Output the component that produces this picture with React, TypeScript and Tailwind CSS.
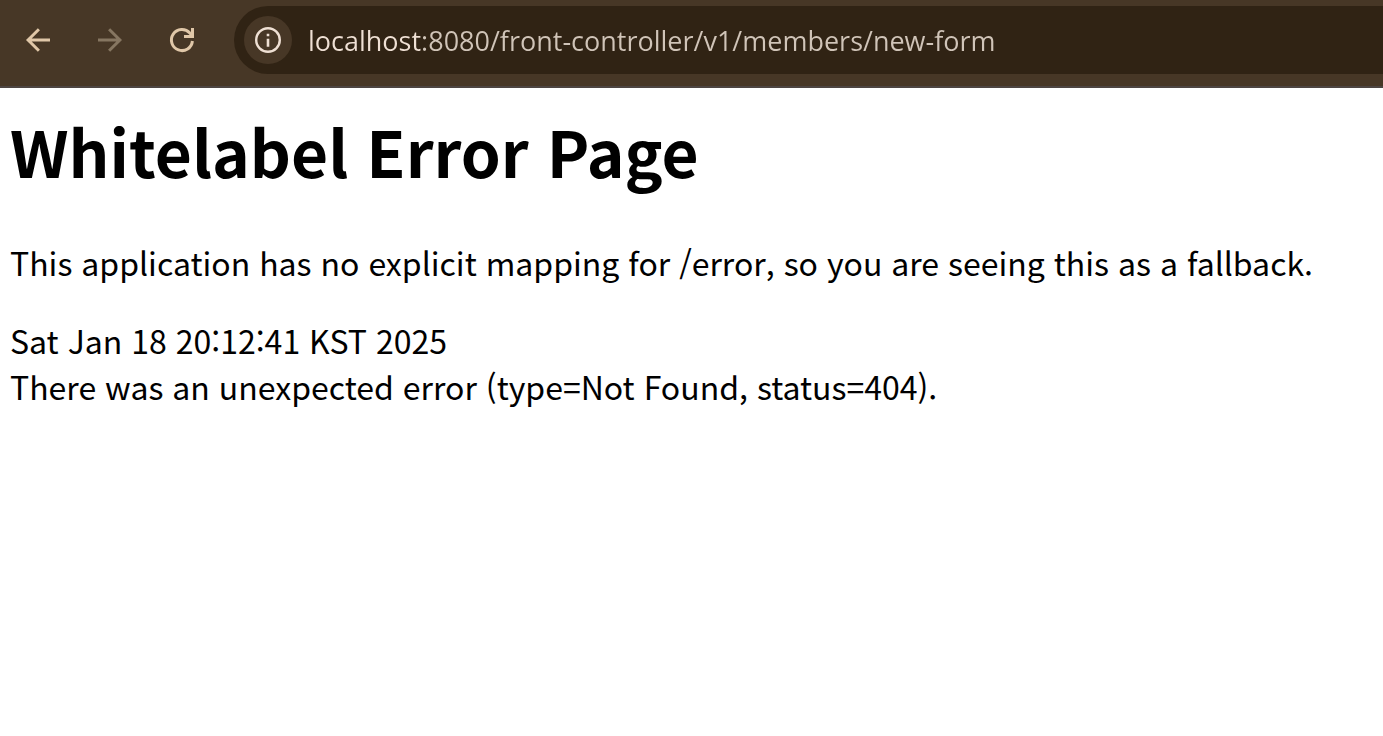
import { useState } from "react";

function BackIcon() {
  return (
    <svg viewBox="0 0 36 36" className="size-9" fill="none" stroke="currentColor" strokeWidth="3" aria-hidden="true">
      <path d="M30 18H8.5M18.900 7.200 8.100 18l10.800 10.800" />
    </svg>
  );
}

function ForwardIcon() {
  return (
    <svg viewBox="0 0 36 36" className="size-9" fill="none" stroke="currentColor" strokeWidth="3" aria-hidden="true">
      <path d="M6 18h21.500M17.100 7.200 27.900 18 17.100 28.800" />
    </svg>
  );
}

function ReloadIcon() {
  return (
    <svg viewBox="0 0 36 36" className="size-9" fill="none" stroke="currentColor" strokeWidth="3" aria-hidden="true">
      <path d="M28.400 19a10.500 10.500 0 1 1-2.600-7.900l3.200 3.400" />
      <path d="M28.500 6v8.500H20" />
    </svg>
  );
}

function InfoIcon() {
  return (
    <svg viewBox="0 0 26 26" className="size-[26px]" fill="none" aria-hidden="true">
      <circle cx="13" cy="13" r="11.800" stroke="currentColor" strokeWidth="2.400" />
      <path d="M11.700 11.700h2.600v8h-2.600zM11.700 6.800h2.600v2.500h-2.600z" fill="currentColor" />
    </svg>
  );
}

function Toolbar() {
  const [address, setAddress] = useState("localhost:8080/front-controller/v1/members/new-form");

  return (
    <header className="flex h-[88px] items-start border-b-2 border-[#4d4542] bg-[#473726] pt-1.5 pl-5 text-[#e0c7a8]">
      <nav aria-label="Navigation" className="flex h-17 shrink-0 items-center gap-9">
        <button type="button" aria-label="Back">
          <BackIcon />
        </button>
        <button type="button" aria-label="Forward" disabled className="text-[#867661]">
          <ForwardIcon />
        </button>
        <button type="button" aria-label="Reload">
          <ReloadIcon />
        </button>
      </nav>
      <div className="ml-[34px] flex h-17 min-w-0 flex-1 items-center rounded-l-full bg-[#302314] pl-2.5">
        <button
          type="button"
          aria-label="View site information"
          className="flex size-12 shrink-0 items-center justify-center rounded-full bg-[#473726] text-[#efe0d4]"
        >
          <InfoIcon />
        </button>
        <input
          type="text"
          aria-label="Address"
          spellCheck={false}
          value={address}
          onChange={(event) => setAddress(event.target.value)}
          className="ml-4 h-12 min-w-0 flex-1 bg-[linear-gradient(to_right,#efe0d4_114px,#d0c4b8_114px)] bg-clip-text font-['Open_Sans','Noto_Sans',sans-serif] text-[27px] text-transparent caret-[#efe0d4] outline-none"
        />
      </div>
    </header>
  );
}

export default function App() {
  return (
    <div lang="ko" className="min-h-screen bg-white font-['Noto_Sans_CJK_KR',sans-serif] text-black">
      <Toolbar />
      <main className="px-2.5 pt-4">
        <h1 className="text-[64px] leading-[92px] font-bold">Whitelabel Error Page</h1>
        <p className="mt-[43px] text-[32px] leading-[46px]">
          This application has no explicit mapping for /error, so you are seeing this as a fallback.
        </p>
        <div className="mt-8 text-[32px] leading-[46px]">Sat Jan 18 20:12:41 KST 2025</div>
        <div className="text-[32px] leading-[46px]">There was an unexpected error (type=Not Found, status=404).</div>
      </main>
    </div>
  );
}
